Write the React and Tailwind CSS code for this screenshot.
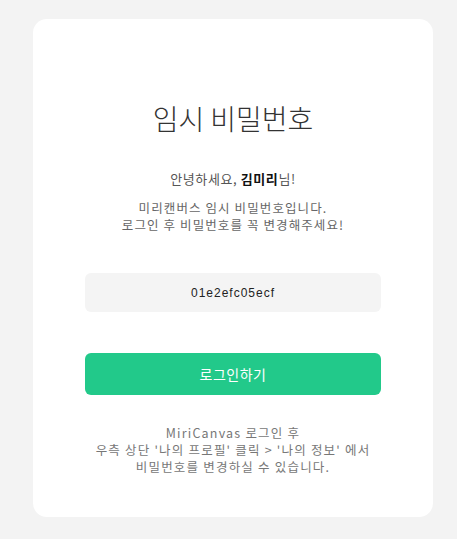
export default function App() {
  return (
    <div className="min-h-[539px] bg-[#f3f3f3] pt-[19px] pb-[22px] font-['Noto_Sans_CJK_KR','Noto_Sans',sans-serif]">
      <div className="ml-[33px] w-[400px] h-[498px] bg-white rounded-[14px] px-[52px] pt-[79px] text-center">
        <h1 className="text-[28px] leading-[40px] font-light text-[#333]">임시 비밀번호</h1>

        <p className="mt-[32px] text-[13px] leading-[17px] text-[#555] tracking-[0.6px]">
          안녕하세요, <b className="font-bold text-[#111]">김미리</b>님!
        </p>
        <p className="mt-[12px] text-[12.5px] leading-[17px] text-[#666] tracking-[1.1px]">
          미리캔버스 임시 비밀번호입니다.
          <br />
          로그인 후 비밀번호를 꼭 변경해주세요!
        </p>

        <div className="mt-[40px] h-[39px] rounded-[6px] bg-[#f4f4f4] flex items-center justify-center text-[12px] tracking-[1px] text-[#222] font-['Liberation_Sans',sans-serif]">
          01e2efc05ecf
        </div>

        <button className="mt-[41px] w-full h-[42px] rounded-[6px] bg-[#22c98a] text-white text-[14px] tracking-[0.5px]">
          로그인하기
        </button>

        <p className="mt-[29px] text-[12.5px] leading-[17px] text-[#777] tracking-[1.2px]">
          MiriCanvas 로그인 후
          <br />
          우측 상단 '나의 프로필' 클릭 &gt; '나의 정보' 에서
          <br />
          비밀번호를 변경하실 수 있습니다.
        </p>
      </div>
    </div>
  );
}
